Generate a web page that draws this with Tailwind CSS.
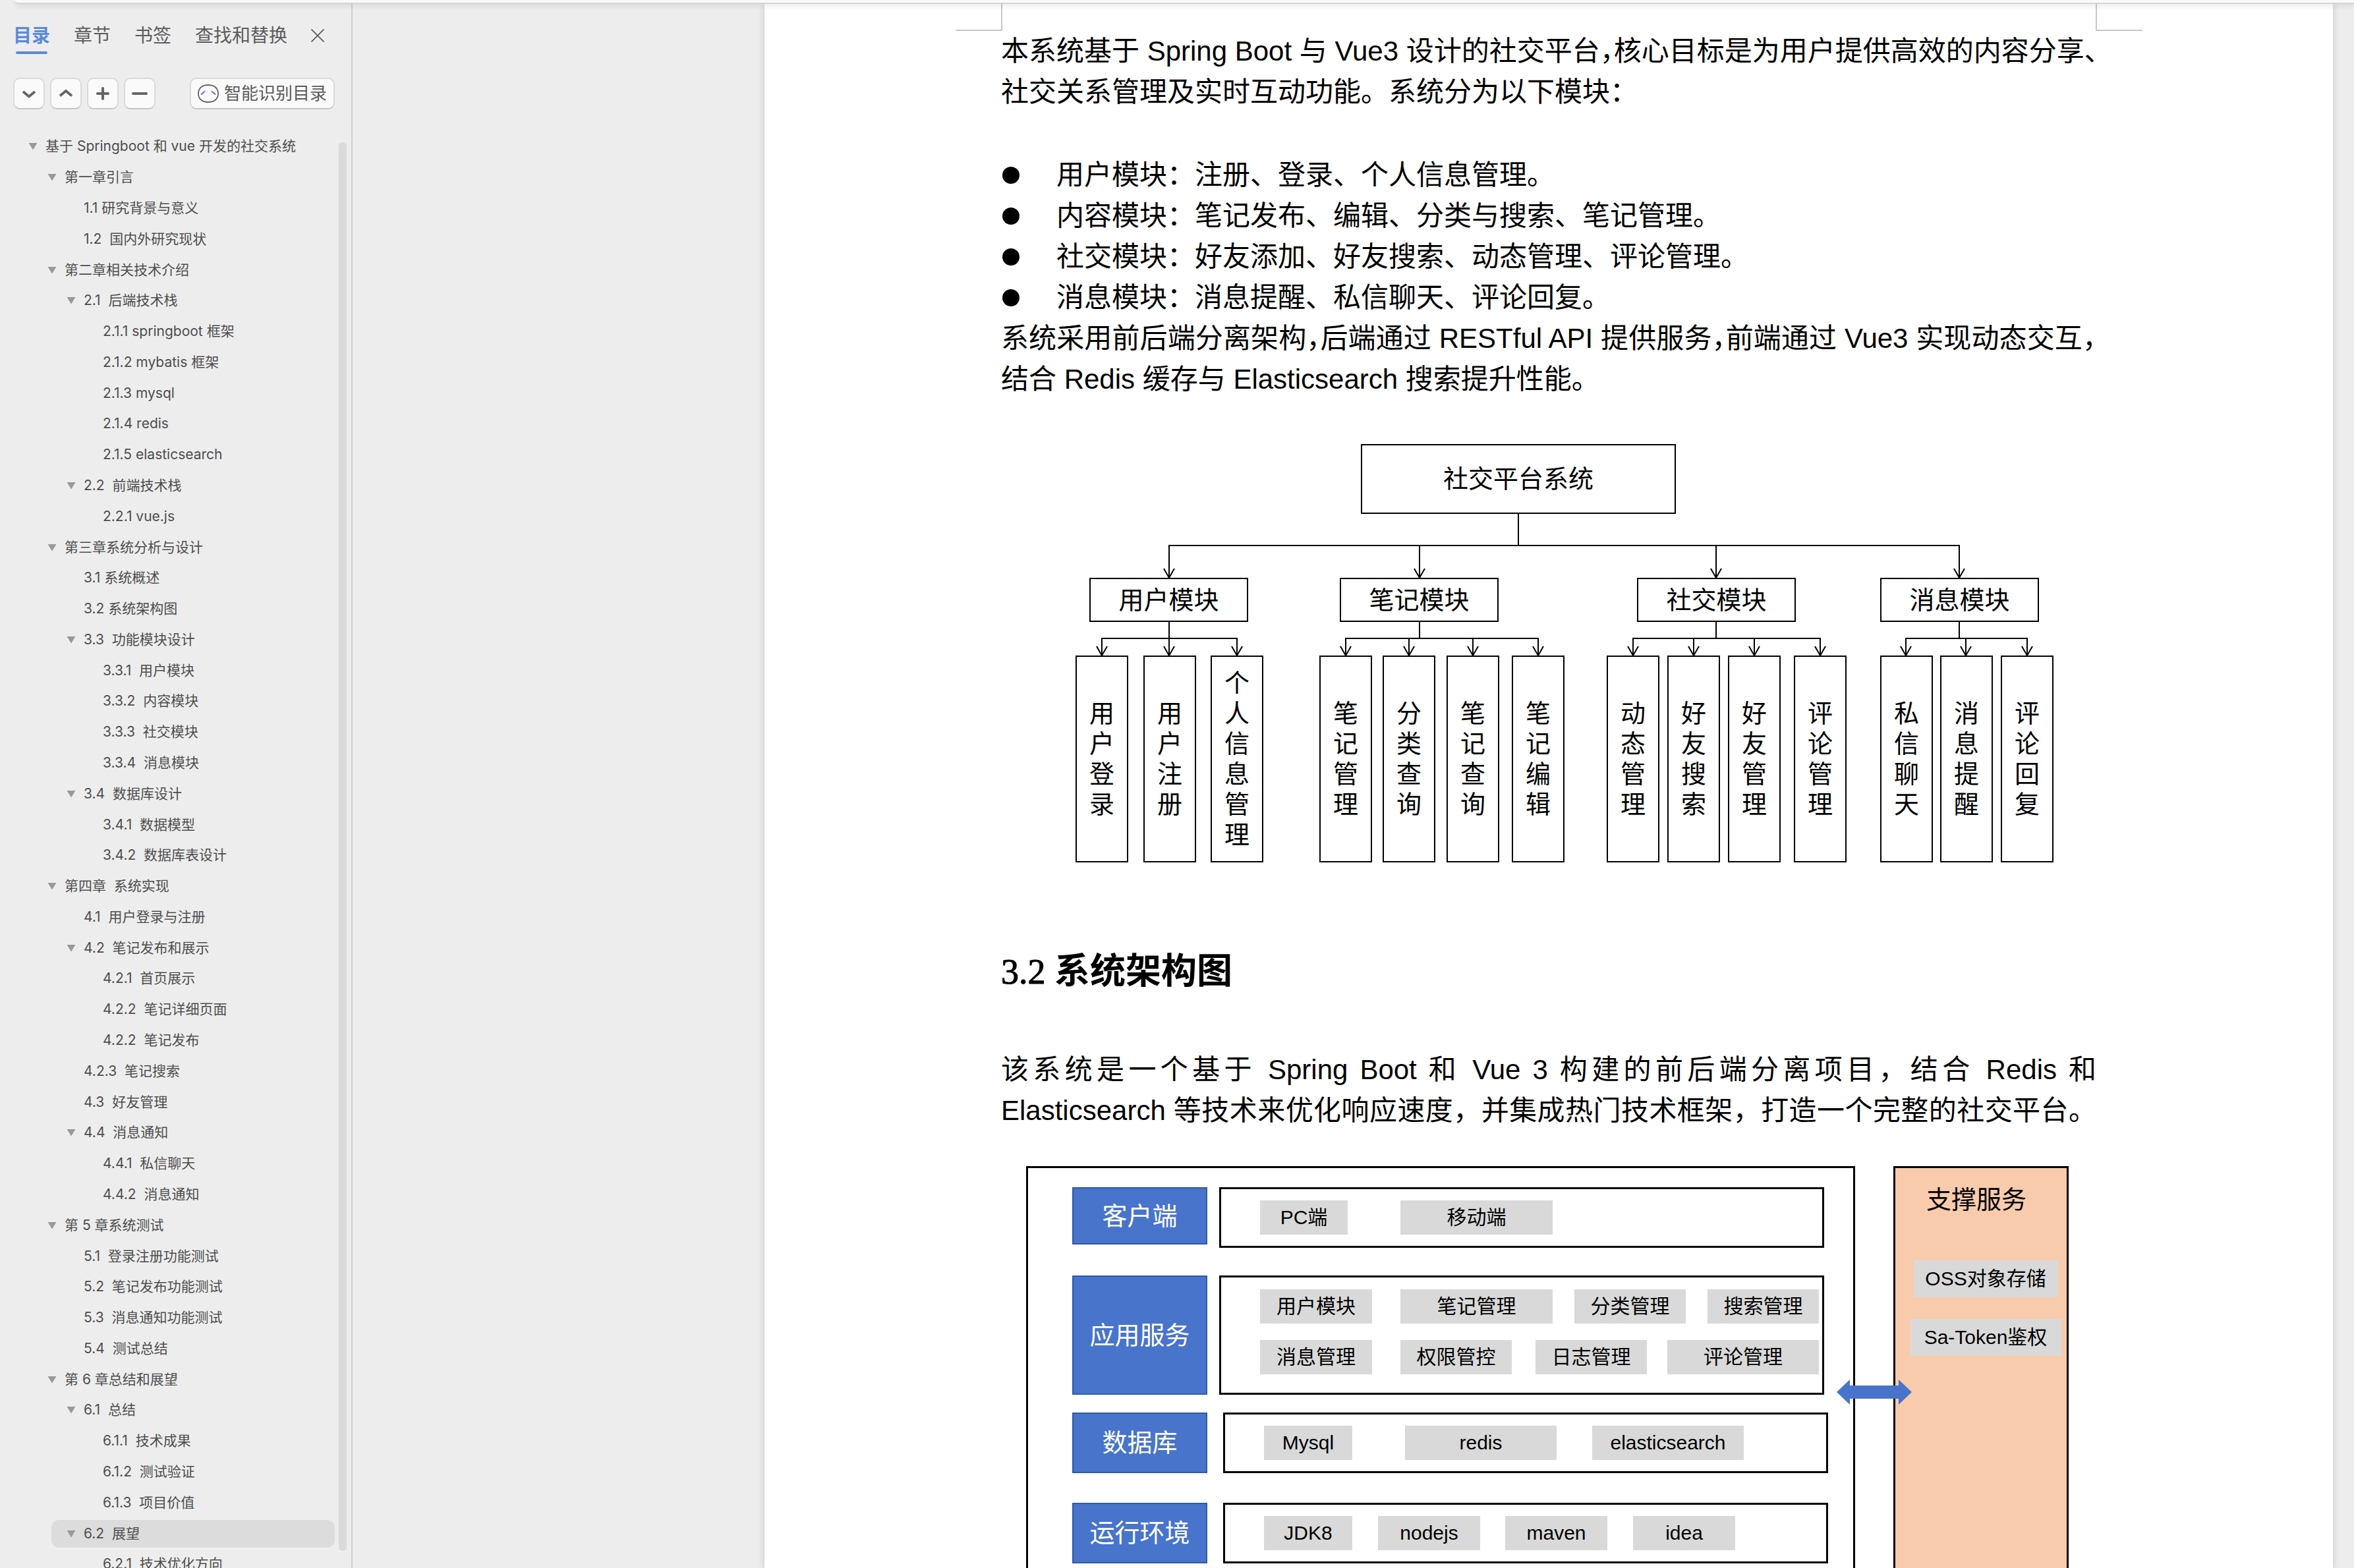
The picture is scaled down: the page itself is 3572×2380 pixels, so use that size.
<!DOCTYPE html>
<html lang="zh-CN">
<head>
<meta charset="utf-8">
<title>基于 Springboot 和 vue 开发的社交系统</title>
<script src="https://cdn.jsdelivr.net/npm/@tailwindcss/browser@4"></script>
</head>
<body class="flex h-screen flex-col overflow-hidden bg-[#ededed] font-['Liberation_Sans','Noto_Sans_CJK_SC',sans-serif] text-black">

<svg class="hidden">
  <symbol id="tri" viewBox="0 0 14 12"><path d="M0.5 1h13L7 11.500z" fill="#999999"/></symbol>
</svg>

<header class="relative z-20 ml-[22px] h-[6px] shrink-0 rounded-bl-[10px] border-b-2 border-[#d6d6d6] bg-[#fafafa] shadow-[0_2px_8px_rgba(0,0,0,0.12)]"></header>

<div class="flex min-h-0 flex-1">

  <!-- Outline panel -->
  <aside class="relative flex w-[535px] shrink-0 flex-col overflow-hidden border-r-2 border-[#cfcfcf] pt-[30px] font-['Inter','Noto_Sans_CJK_SC',sans-serif]">
    <div role="tablist" class="flex items-start gap-9 pl-5 text-[28px] leading-9 text-[#5c5c5c]">
      <button role="tab" aria-selected="true" class="flex flex-col items-center gap-[6px] font-bold text-[#5b8bd8]">目录<span class="h-1 w-12 rounded-full bg-[#5b8bd8]"></span></button>
      <button role="tab">章节</button>
      <button role="tab">书签</button>
      <button role="tab">查找和替换</button>
      <button aria-label="关闭" class="flex h-9 items-center"><svg class="h-5 w-5" viewBox="0 0 20 20" fill="none" stroke="#5c5c5c" stroke-width="1.800"><path d="M0.500 0.500l19 19M19.500 0.500l-19 19"/></svg></button>
    </div>

    <div class="mt-9 flex gap-2 pl-5 text-[#666666] [&>button]:flex [&>button]:h-12 [&>button]:items-center [&>button]:justify-center [&>button]:rounded-[10px] [&>button]:border-2 [&>button]:border-[#dadada] [&>button]:border-b-[#c6c6c6] [&>button]:bg-[#fafafa]">
      <button aria-label="展开" class="w-12"><svg class="h-6 w-6" viewBox="0 0 24 24" fill="none" stroke="currentColor" stroke-width="3.800"><path d="M3 9l9 7.500L21 9"/></svg></button>
      <button aria-label="收起" class="w-12"><svg class="h-6 w-6" viewBox="0 0 24 24" fill="none" stroke="currentColor" stroke-width="3.800"><path d="M3 15.500l9-7.500 9 7.500"/></svg></button>
      <button aria-label="添加" class="w-12"><svg class="h-6 w-6" viewBox="0 0 24 24" fill="none" stroke="currentColor" stroke-width="4" stroke-linecap="round"><path d="M4 12h16M12 4v16"/></svg></button>
      <button aria-label="删除" class="w-12"><svg class="h-6 w-6" viewBox="0 0 24 24" fill="none" stroke="currentColor" stroke-width="4" stroke-linecap="round"><path d="M2 12h20"/></svg></button>
      <button class="ml-11 w-[220px] gap-2 text-[26px] leading-8 text-[#5c5c5c]"><svg class="h-7 w-8 shrink-0" viewBox="0 0 32 28" fill="none"><path d="M16 1C25.500 1 31 6 31 14s-5.500 13-15 13S1 22 1 14 6.500 1 16 1z" stroke="#666666" stroke-width="1.800"/><path d="M5 15.500l6-5M27 15.500l-6-5" stroke="#5577e8" stroke-width="2"/></svg><span class="whitespace-nowrap">智能识别目录</span></button>
    </div>

    <ul class="mt-[33px] flex h-[2199px] shrink-0 flex-col whitespace-pre text-[21px] leading-[30px] text-[#4d4d4d] [&>li]:flex [&>li]:flex-1 [&>li]:items-center [&>li]:pr-[25px] [&_a]:flex [&_a]:h-[42px] [&_a]:flex-1 [&_a]:items-center [&_a]:gap-3 [&_a]:rounded-xl [&_a]:pl-[23px] [&_svg]:h-3 [&_svg]:w-[14px]">
      <li class="pl-5"><a href="#"><svg><use href="#tri"/></svg>基于 Springboot 和 vue 开发的社交系统</a></li>
      <li class="pl-[49px]"><a href="#"><svg><use href="#tri"/></svg>第一章引言</a></li>
      <li class="pl-[78px]"><a href="#"><svg></svg>1.1 研究背景与意义</a></li>
      <li class="pl-[78px]"><a href="#"><svg></svg>1.2  国内外研究现状</a></li>
      <li class="pl-[49px]"><a href="#"><svg><use href="#tri"/></svg>第二章相关技术介绍</a></li>
      <li class="pl-[78px]"><a href="#"><svg><use href="#tri"/></svg>2.1  后端技术栈</a></li>
      <li class="pl-[107px]"><a href="#"><svg></svg>2.1.1 springboot 框架</a></li>
      <li class="pl-[107px]"><a href="#"><svg></svg>2.1.2 mybatis 框架</a></li>
      <li class="pl-[107px]"><a href="#"><svg></svg>2.1.3 mysql</a></li>
      <li class="pl-[107px]"><a href="#"><svg></svg>2.1.4 redis</a></li>
      <li class="pl-[107px]"><a href="#"><svg></svg>2.1.5 elasticsearch</a></li>
      <li class="pl-[78px]"><a href="#"><svg><use href="#tri"/></svg>2.2  前端技术栈</a></li>
      <li class="pl-[107px]"><a href="#"><svg></svg>2.2.1 vue.js</a></li>
      <li class="pl-[49px]"><a href="#"><svg><use href="#tri"/></svg>第三章系统分析与设计</a></li>
      <li class="pl-[78px]"><a href="#"><svg></svg>3.1 系统概述</a></li>
      <li class="pl-[78px]"><a href="#"><svg></svg>3.2 系统架构图</a></li>
      <li class="pl-[78px]"><a href="#"><svg><use href="#tri"/></svg>3.3  功能模块设计</a></li>
      <li class="pl-[107px]"><a href="#"><svg></svg>3.3.1  用户模块</a></li>
      <li class="pl-[107px]"><a href="#"><svg></svg>3.3.2  内容模块</a></li>
      <li class="pl-[107px]"><a href="#"><svg></svg>3.3.3  社交模块</a></li>
      <li class="pl-[107px]"><a href="#"><svg></svg>3.3.4  消息模块</a></li>
      <li class="pl-[78px]"><a href="#"><svg><use href="#tri"/></svg>3.4  数据库设计</a></li>
      <li class="pl-[107px]"><a href="#"><svg></svg>3.4.1  数据模型</a></li>
      <li class="pl-[107px]"><a href="#"><svg></svg>3.4.2  数据库表设计</a></li>
      <li class="pl-[49px]"><a href="#"><svg><use href="#tri"/></svg>第四章  系统实现</a></li>
      <li class="pl-[78px]"><a href="#"><svg></svg>4.1  用户登录与注册</a></li>
      <li class="pl-[78px]"><a href="#"><svg><use href="#tri"/></svg>4.2  笔记发布和展示</a></li>
      <li class="pl-[107px]"><a href="#"><svg></svg>4.2.1  首页展示</a></li>
      <li class="pl-[107px]"><a href="#"><svg></svg>4.2.2  笔记详细页面</a></li>
      <li class="pl-[107px]"><a href="#"><svg></svg>4.2.2  笔记发布</a></li>
      <li class="pl-[78px]"><a href="#"><svg></svg>4.2.3  笔记搜索</a></li>
      <li class="pl-[78px]"><a href="#"><svg></svg>4.3  好友管理</a></li>
      <li class="pl-[78px]"><a href="#"><svg><use href="#tri"/></svg>4.4  消息通知</a></li>
      <li class="pl-[107px]"><a href="#"><svg></svg>4.4.1  私信聊天</a></li>
      <li class="pl-[107px]"><a href="#"><svg></svg>4.4.2  消息通知</a></li>
      <li class="pl-[49px]"><a href="#"><svg><use href="#tri"/></svg>第 5 章系统测试</a></li>
      <li class="pl-[78px]"><a href="#"><svg></svg>5.1  登录注册功能测试</a></li>
      <li class="pl-[78px]"><a href="#"><svg></svg>5.2  笔记发布功能测试</a></li>
      <li class="pl-[78px]"><a href="#"><svg></svg>5.3  消息通知功能测试</a></li>
      <li class="pl-[78px]"><a href="#"><svg></svg>5.4  测试总结</a></li>
      <li class="pl-[49px]"><a href="#"><svg><use href="#tri"/></svg>第 6 章总结和展望</a></li>
      <li class="pl-[78px]"><a href="#"><svg><use href="#tri"/></svg>6.1  总结</a></li>
      <li class="pl-[107px]"><a href="#"><svg></svg>6.1.1  技术成果</a></li>
      <li class="pl-[107px]"><a href="#"><svg></svg>6.1.2  测试验证</a></li>
      <li class="pl-[107px]"><a href="#"><svg></svg>6.1.3  项目价值</a></li>
      <li class="pl-[78px]"><a href="#" aria-current="true" class="bg-[#dcdcdc]"><svg><use href="#tri"/></svg>6.2  展望</a></li>
      <li class="pl-[107px]"><a href="#"><svg></svg>6.2.1  技术优化方向</a></li>
    </ul>
    <div class="absolute top-[210px] right-[7px] bottom-[26px] w-3 rounded-full bg-[#dadada]"></div>
  </aside>

  <!-- Document -->
  <main class="min-w-0 flex-1 overflow-hidden pl-[625px] pr-8">
    <article class="relative h-full bg-white px-[359px] pt-[41px] text-[42px] leading-[62px] whitespace-nowrap shadow-[0_0_10px_rgba(0,0,0,0.18)]">
      <!-- page margin corners -->
      <div class="absolute top-0 left-[290px] h-[41px] w-[71px] border-r-2 border-b-2 border-[#c8c8c8]"></div>
      <div class="absolute top-0 right-[289px] h-[41px] w-[71px] border-b-2 border-l-2 border-[#c8c8c8]"></div>

      <p>本系统基于 Spring Boot 与 Vue3 设计的社交平台<span class="[font-feature-settings:'halt']">，</span>核心目标是为用户提供高效的内容分享、<br>社交关系管理及实时互动功能。系统分为以下模块：</p>

      <ul class="mt-16 pl-[2px] [&>li]:flex [&>li]:items-center [&>li]:gap-14 [&>li]:before:h-[26px] [&>li]:before:w-[26px] [&>li]:before:rounded-full [&>li]:before:bg-black [&>li]:before:content-['']">
        <li>用户模块：注册、登录、个人信息管理。</li>
        <li>内容模块：笔记发布、编辑、分类与搜索、笔记管理。</li>
        <li>社交模块：好友添加、好友搜索、动态管理、评论管理。</li>
        <li>消息模块：消息提醒、私信聊天、评论回复。</li>
      </ul>

      <div class="whitespace-normal">
        <p class="[text-align-last:justify]">系统采用前后端分离架构<span class="[font-feature-settings:'halt']">，</span>后端通过 RESTful API 提供服务<span class="[font-feature-settings:'halt']">，</span>前端通过 Vue3 实现动态交互<span class="[font-feature-settings:'halt']">，</span></p>
        <p>结合 Redis 缓存与 Elasticsearch 搜索提升性能。</p>
      </div>

      <!-- Module tree diagram -->
      <figure class="relative mt-[67px] h-[635px] text-[38px] leading-[46px] [&>div]:absolute [&>div]:flex [&>div]:items-center [&>div]:justify-center [&>div]:border-2 [&>div]:border-black">
        <svg class="absolute inset-0 h-full w-full" fill="none" stroke="#000" stroke-width="2">
          <path d="M785 105V154M255 203V154H1454V203M635 154V203M1085 154V203"/>
          <path d="M255 269V321M153 321V295H358V321M635 269V295M523 321V295H815V321M619 295V321M716 295V321"/>
          <path d="M1085 269V295M959 321V295H1243V321M1051 295V321M1143 295V321M1454 269V295M1373 321V295H1557V321M1464 295V321"/>
          <path d="M247 189l8 14 8-14M627 189l8 14 8-14M1077 189l8 14 8-14M1446 189l8 14 8-14"/>
          <path d="M145 307l8 14 8-14M247 307l8 14 8-14M350 307l8 14 8-14M515 307l8 14 8-14M611 307l8 14 8-14M708 307l8 14 8-14M807 307l8 14 8-14M951 307l8 14 8-14M1043 307l8 14 8-14M1135 307l8 14 8-14M1235 307l8 14 8-14M1365 307l8 14 8-14M1456 307l8 14 8-14M1549 307l8 14 8-14"/>
        </svg>
        <div class="top-0 left-[546px] h-[106px] w-[478px]">社交平台系统</div>
        <div class="top-[203px] left-[134px] h-[67px] w-[241px]">用户模块</div>
        <div class="top-[203px] left-[514px] h-[67px] w-[241px]">笔记模块</div>
        <div class="top-[203px] left-[965px] h-[67px] w-[241px]">社交模块</div>
        <div class="top-[203px] left-[1334px] h-[67px] w-[241px]">消息模块</div>
        <div class="top-[321px] left-[113px] h-[314px] w-[80px]">用<br>户<br>登<br>录</div>
        <div class="top-[321px] left-[216px] h-[314px] w-[80px]">用<br>户<br>注<br>册</div>
        <div class="top-[321px] left-[318px] h-[314px] w-[80px]">个<br>人<br>信<br>息<br>管<br>理</div>
        <div class="top-[321px] left-[483px] h-[314px] w-[80px]">笔<br>记<br>管<br>理</div>
        <div class="top-[321px] left-[579px] h-[314px] w-[80px]">分<br>类<br>查<br>询</div>
        <div class="top-[321px] left-[676px] h-[314px] w-[80px]">笔<br>记<br>查<br>询</div>
        <div class="top-[321px] left-[775px] h-[314px] w-[80px]">笔<br>记<br>编<br>辑</div>
        <div class="top-[321px] left-[919px] h-[314px] w-[80px]">动<br>态<br>管<br>理</div>
        <div class="top-[321px] left-[1011px] h-[314px] w-[80px]">好<br>友<br>搜<br>索</div>
        <div class="top-[321px] left-[1103px] h-[314px] w-[80px]">好<br>友<br>管<br>理</div>
        <div class="top-[321px] left-[1203px] h-[314px] w-[80px]">评<br>论<br>管<br>理</div>
        <div class="top-[321px] left-[1334px] h-[314px] w-[80px]">私<br>信<br>聊<br>天</div>
        <div class="top-[321px] left-[1425px] h-[314px] w-[80px]">消<br>息<br>提<br>醒</div>
        <div class="top-[321px] left-[1517px] h-[314px] w-[80px]">评<br>论<br>回<br>复</div>
      </figure>

      <h2 class="mt-[134px] text-[54px] font-bold"><span class="font-['Liberation_Serif',serif] font-normal [-webkit-text-stroke:1px_black]">3.2 </span>系统架构图</h2>

      <div class="mt-[87px] whitespace-normal">
        <p class="[text-align-last:justify]">该系统是一个基于 Spring Boot 和 Vue 3 构建的前后端分离项目，结合 Redis 和</p>
        <p class="[text-align-last:justify]">Elasticsearch 等技术来优化响应速度，并集成热门技术框架，打造一个完整的社交平台。</p>
      </div>

      <!-- Architecture diagram -->
      <figure class="relative mt-[53px] flex gap-[58px] pl-[38px] text-[30px] leading-[40px] [&_span]:flex [&_span]:h-[52px] [&_span]:items-center [&_span]:justify-center [&_span]:bg-[#d9d9d9] [&_strong]:flex [&_strong]:w-[205px] [&_strong]:items-center [&_strong]:justify-center [&_strong]:border-2 [&_strong]:border-[#3059a8] [&_strong]:bg-[#4874cb] [&_strong]:text-[38px] [&_strong]:font-normal [&_strong]:text-white">
        <div class="h-[640px] w-[1258px] border-[3px] border-black pt-[29px] pl-[67px]">
          <div class="flex h-[92px] gap-[18px]">
            <strong class="h-[87px]">客户端</strong>
            <div class="flex w-[918px] items-center border-[3px] border-black pl-[59px]">
              <span class="w-[133px]">PC端</span>
              <span class="ml-20 w-[231px]">移动端</span>
            </div>
          </div>
          <div class="mt-[42px] flex h-[181px] gap-[18px]">
            <strong>应用服务</strong>
            <div class="flex w-[918px] flex-col gap-[25px] border-[3px] border-black pt-[18px] pl-[59px]">
              <div class="flex">
                <span class="w-[170px]">用户模块</span>
                <span class="ml-[43px] w-[231px]">笔记管理</span>
                <span class="ml-[33px] w-[169px]">分类管理</span>
                <span class="ml-[33px] w-[169px]">搜索管理</span>
              </div>
              <div class="flex">
                <span class="w-[170px]">消息管理</span>
                <span class="ml-[43px] w-[169px]">权限管控</span>
                <span class="ml-[36px] w-[169px]">日志管理</span>
                <span class="ml-[31px] w-[230px]">评论管理</span>
              </div>
            </div>
          </div>
          <div class="mt-[27px] flex h-[92px] gap-6">
            <strong>数据库</strong>
            <div class="flex w-[918px] items-center border-[3px] border-black pl-[59px]">
              <span class="w-[134px]">Mysql</span>
              <span class="ml-20 w-[230px]">redis</span>
              <span class="ml-[54px] w-[230px]">elasticsearch</span>
            </div>
          </div>
          <div class="mt-[45px] flex h-[92px] gap-6">
            <strong>运行环境</strong>
            <div class="flex w-[918px] items-center border-[3px] border-black pl-[59px]">
              <span class="w-[134px]">JDK8</span>
              <span class="ml-[39px] w-[155px]">nodejs</span>
              <span class="ml-[38px] w-[155px]">maven</span>
              <span class="ml-[39px] w-[155px]">idea</span>
            </div>
          </div>
        </div>
        <div class="flex w-[266px] flex-col items-center border-[3px] border-black bg-[#f8cbad] pt-[25px] pl-[14px]">
          <p class="mr-7 text-[38px] leading-[46px]">支撑服务</p>
          <span class="mt-[69px] w-[219px] py-7">OSS对象存储</span>
          <span class="mt-[33px] w-[229px] py-7">Sa-Token鉴权</span>
        </div>
        <svg class="absolute top-[324px] left-[1268px] h-[38px] w-[114px]" viewBox="0 0 114 38" fill="#4874cb"><path d="M0 19L20 0v9h74V0l20 19-20 19v-9H20v9z"/></svg>
      </figure>
    </article>
  </main>
</div>
</body>
</html>
